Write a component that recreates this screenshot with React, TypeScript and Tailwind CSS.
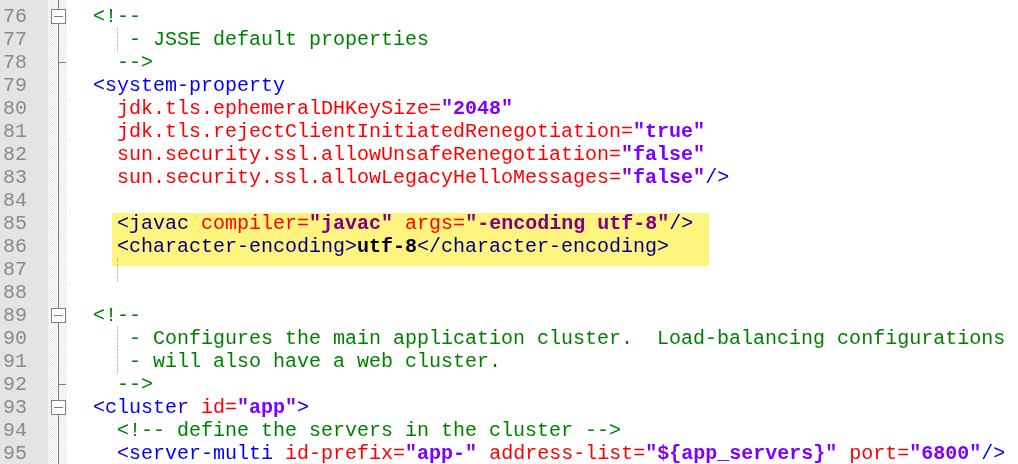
import type { ReactNode } from 'react'

type Fold = 'open' | 'end'

type Line = {
  n: number | null
  code?: ReactNode
  fold?: Fold
  guide?: boolean
  mark?: boolean
}

const T = ({ children }: { children: ReactNode }) => <span className="text-[#0000ff]">{children}</span>
const A = ({ children }: { children: ReactNode }) => <span className="text-[#ff0000]">{children}</span>
const V = ({ children }: { children: ReactNode }) => <span className="font-bold text-[#8000ff]">{children}</span>
const C = ({ children }: { children: ReactNode }) => <span className="text-[#008000]">{children}</span>
const B = ({ children }: { children: ReactNode }) => <span className="font-bold text-black">{children}</span>

const lines: Line[] = [
  { n: 76, fold: 'open', code: <C>{'<!--'}</C> },
  { n: 77, guide: true, code: <C>{'   - JSSE default properties'}</C> },
  { n: 78, fold: 'end', code: <C>{'  -->'}</C> },
  { n: 79, code: <T>{'<system-property'}</T> },
  { n: 80, code: <>{'  '}<A>jdk.tls.ephemeralDHKeySize=</A><V>"2048"</V></> },
  { n: 81, code: <>{'  '}<A>jdk.tls.rejectClientInitiatedRenegotiation=</A><V>"true"</V></> },
  { n: 82, code: <>{'  '}<A>sun.security.ssl.allowUnsafeRenegotiation=</A><V>"false"</V></> },
  { n: 83, code: <>{'  '}<A>sun.security.ssl.allowLegacyHelloMessages=</A><V>"false"</V><T>/&gt;</T></> },
  { n: 84 },
  {
    n: 85,
    mark: true,
    code: (
      <>
        {'  '}<T>&lt;javac</T> <A>compiler=</A><V>"javac"</V> <A>args=</A><V>"-encoding utf-8"</V><T>/&gt;</T>
      </>
    ),
  },
  { n: 86, code: <>{'  '}<T>&lt;character-encoding&gt;</T><B>utf-8</B><T>&lt;/character-encoding&gt;</T></> },
  { n: 87, guide: true },
  { n: 88 },
  { n: 89, fold: 'open', code: <C>{'<!--'}</C> },
  { n: 90, guide: true, code: <C>{'   - Configures the main application cluster.  Load-balancing configurations'}</C> },
  { n: 91, guide: true, code: <C>{'   - will also have a web cluster.'}</C> },
  { n: 92, fold: 'end', code: <C>{'  -->'}</C> },
  { n: 93, fold: 'open', code: <><T>&lt;cluster</T> <A>id=</A><V>"app"</V><T>&gt;</T></> },
  { n: 94, code: <C>{'  <!-- define the servers in the cluster -->'}</C> },
  {
    n: 95,
    code: (
      <>
        {'  '}<T>&lt;server-multi</T> <A>id-prefix=</A><V>"app-"</V> <A>address-list=</A><V>"${'{'}app_servers{'}'}"</V>{' '}
        <A>port=</A><V>"6800"</V><T>/&gt;</T>
      </>
    ),
  },
]

const FoldCell = ({ fold }: { fold?: Fold }) => (
  <div className="relative w-[19px] shrink-0 bg-[repeating-conic-gradient(#e9e9e9_0_25%,#ffffff_0_50%)] bg-size-[2px_2px]">
    <div className="absolute left-[10px] top-0 bottom-0 w-px bg-[#808080]" />
    {fold === 'open' && (
      <div className="absolute left-[3px] top-[4px] flex h-[15px] w-[15px] items-center justify-center border border-[#808080] bg-white">
        <div className="h-px w-[9px] bg-[#808080]" />
      </div>
    )}
    {fold === 'end' && <div className="absolute left-[10px] top-[11px] h-px w-[8px] bg-[#808080]" />}
  </div>
)

const Row = ({ line, height = 23 }: { line: Line; height?: number }) => (
  <div className="flex" style={{ height }}>
    <div className="w-[48px] shrink-0 bg-[#e4e4e4] pl-[3px] text-[#8a8a8a]">{line.n}</div>
    <FoldCell fold={line.fold} />
    <div className="relative flex-1 whitespace-pre pl-[26px]">
      {line.guide && <div className="absolute left-[50px] top-0 bottom-0 border-l border-dotted border-[#a8a8a8]" />}
      {line.code}
      {line.mark && (
        <div className="pointer-events-none absolute left-[45px] top-[1px] z-10 h-[53px] w-[597px] bg-[#fff47e] mix-blend-multiply" />
      )}
    </div>
  </div>
)

export default function App() {
  return (
    <div className="h-[464px] w-[1018px] overflow-hidden bg-white font-['Liberation_Mono','Courier_New',monospace] text-[20px] leading-[23px]">
      <Row line={{ n: null }} height={4.5} />
      {lines.map((line) => (
        <Row key={line.n} line={line} />
      ))}
    </div>
  )
}
